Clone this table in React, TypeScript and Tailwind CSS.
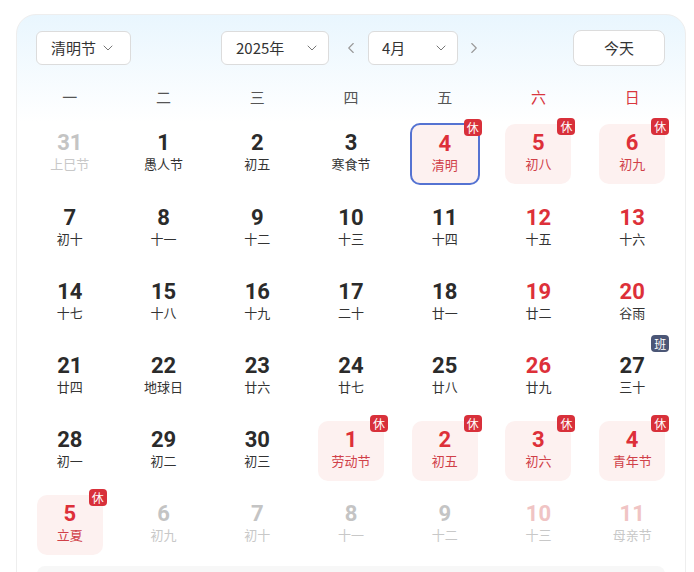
import { ChevronDown, ChevronLeft, ChevronRight } from "lucide-react";

type Day = {
  n: number;
  lunar: string;
  other?: boolean;
  red?: boolean;
  rest?: boolean;
  work?: boolean;
  selected?: boolean;
};

const weekdays = ["一", "二", "三", "四", "五", "六", "日"];

const days: Day[] = [
  { n: 31, lunar: "上巳节", other: true },
  { n: 1, lunar: "愚人节" },
  { n: 2, lunar: "初五" },
  { n: 3, lunar: "寒食节" },
  { n: 4, lunar: "清明", red: true, rest: true, selected: true },
  { n: 5, lunar: "初八", red: true, rest: true },
  { n: 6, lunar: "初九", red: true, rest: true },
  { n: 7, lunar: "初十" },
  { n: 8, lunar: "十一" },
  { n: 9, lunar: "十二" },
  { n: 10, lunar: "十三" },
  { n: 11, lunar: "十四" },
  { n: 12, lunar: "十五", red: true },
  { n: 13, lunar: "十六", red: true },
  { n: 14, lunar: "十七" },
  { n: 15, lunar: "十八" },
  { n: 16, lunar: "十九" },
  { n: 17, lunar: "二十" },
  { n: 18, lunar: "廿一" },
  { n: 19, lunar: "廿二", red: true },
  { n: 20, lunar: "谷雨", red: true },
  { n: 21, lunar: "廿四" },
  { n: 22, lunar: "地球日" },
  { n: 23, lunar: "廿六" },
  { n: 24, lunar: "廿七" },
  { n: 25, lunar: "廿八" },
  { n: 26, lunar: "廿九", red: true },
  { n: 27, lunar: "三十", work: true },
  { n: 28, lunar: "初一" },
  { n: 29, lunar: "初二" },
  { n: 30, lunar: "初三" },
  { n: 1, lunar: "劳动节", other: true, red: true, rest: true },
  { n: 2, lunar: "初五", other: true, red: true, rest: true },
  { n: 3, lunar: "初六", other: true, red: true, rest: true },
  { n: 4, lunar: "青年节", other: true, red: true, rest: true },
  { n: 5, lunar: "立夏", other: true, red: true, rest: true },
  { n: 6, lunar: "初九", other: true },
  { n: 7, lunar: "初十", other: true },
  { n: 8, lunar: "十一", other: true },
  { n: 9, lunar: "十二", other: true },
  { n: 10, lunar: "十三", other: true, red: true },
  { n: 11, lunar: "母亲节", other: true, red: true },
];

function DayCell({ d }: { d: Day }) {
  // rest days in the next month still show full red
  const faded = d.other && !d.rest;
  let numColor = "text-[#2b2b2b]";
  let lunarColor = "text-[#333]";
  if (d.red) numColor = "text-[#dd3039]";
  if (d.rest) lunarColor = "text-[#d04048]";
  if (faded) {
    numColor = d.red ? "text-[#f0c4c4]" : "text-[#c4c4c4]";
    lunarColor = "text-[#c8c8c8]";
  }

  return (
    <div className="flex justify-center">
      <div
        className={`relative flex h-[60px] w-[66px] flex-col items-center rounded-[10px] ${
          d.rest ? "bg-[#fdf1f0]" : ""
        } ${d.selected ? "border-2 border-[#5573d2] w-[70px] h-[62px] -mt-px" : ""}`}
      >
        <span
          className={`mt-[6px] text-[22px] font-bold leading-[26px] ${numColor}`}
          style={{ fontFamily: "Roboto, 'DejaVu Sans', sans-serif" }}
        >
          {d.n}
        </span>
        <span className={`text-[13px] leading-[16px] ${lunarColor}`}>{d.lunar}</span>
        {d.rest && (
          <span className="absolute -right-[4px] -top-[6px] flex h-[17px] w-[18px] items-center justify-center rounded-[4px] bg-[#d8303a] text-[12px] leading-none text-white">
            休
          </span>
        )}
        {d.work && (
          <span className="absolute -right-[4px] -top-[12px] flex h-[17px] w-[18px] items-center justify-center rounded-[4px] bg-[#4b5676] text-[12px] leading-none text-white">
            班
          </span>
        )}
      </div>
    </div>
  );
}

export default function App() {
  return (
    <div
      className="h-[572px] w-[694px] overflow-hidden bg-white pt-[14px] pl-[16px]"
      style={{ fontFamily: "'Noto Sans CJK SC', 'Noto Sans', sans-serif" }}
    >
      <div className="h-[600px] w-[670px] rounded-[20px] border border-[#eeeeee] bg-gradient-to-b from-[#e9f6fe] via-white via-[18%] to-white">
        <div className="flex items-center pt-[15px] pl-[19px] pr-[20px]">
          <button className="flex h-[34px] w-[95px] items-center justify-center gap-1 rounded-[6px] border border-[#dcdcdc] bg-white text-[15px] text-[#333]">
            清明节
            <ChevronDown size={16} strokeWidth={1.5} className="text-[#777]" />
          </button>
          <div className="ml-[90px] flex items-center">
            <button className="flex h-[34px] w-[108px] items-center justify-between rounded-[6px] border border-[#dcdcdc] bg-white pl-[14px] pr-[8px] text-[15px] text-[#333]">
              2025年
              <ChevronDown size={16} strokeWidth={1.5} className="text-[#777]" />
            </button>
            <ChevronLeft size={18} strokeWidth={1.5} className="ml-[13px] text-[#999]" />
            <button className="ml-[8px] flex h-[34px] w-[90px] items-center justify-between rounded-[6px] border border-[#dcdcdc] bg-white pl-[13px] pr-[8px] text-[15px] text-[#333]">
              4月
              <ChevronDown size={16} strokeWidth={1.5} className="text-[#777]" />
            </button>
            <ChevronRight size={18} strokeWidth={1.5} className="ml-[7px] text-[#999]" />
          </div>
          <button className="ml-auto flex h-[36px] w-[92px] items-center justify-center rounded-[8px] border border-[#dcdcdc] bg-white text-[15px] text-[#333]">
            今天
          </button>
        </div>

        <div className="mt-[16px] grid grid-cols-7 px-[6px]">
          {weekdays.map((w, i) => (
            <div
              key={w}
              className={`flex h-[30px] items-center justify-center text-[15px] ${
                i >= 5 ? "text-[#d9363e]" : "text-[#555]"
              }`}
            >
              {w}
            </div>
          ))}
        </div>

        <div className="mt-[12px] grid grid-cols-7 gap-y-[14px] px-[6px]">
          {days.map((d, i) => (
            <DayCell key={i} d={d} />
          ))}
        </div>

        <div className="mx-[20px] mt-[11px] h-[40px] rounded-[8px] bg-[#f7f7f7]" />
      </div>
    </div>
  );
}
